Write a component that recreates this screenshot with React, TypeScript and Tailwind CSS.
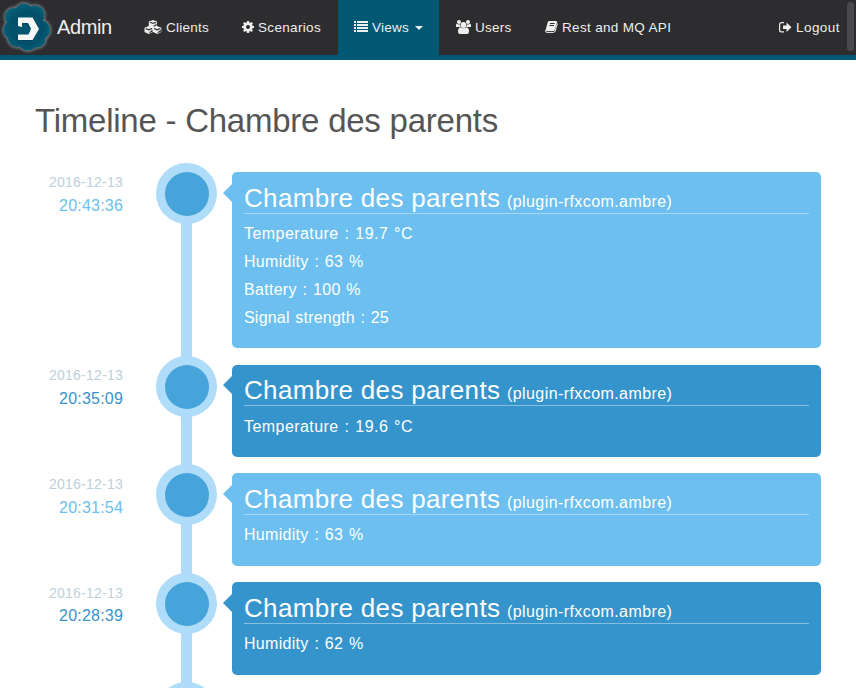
import React from 'react';

type Entry = {
  date: string;
  time: string;
  lines: string[];
  light: boolean;
  row: string;
  card: string;
  arrow: string;
  stamp: string;
  heading: string;
};

const entries: Entry[] = [
  { date: '2016-12-13', time: '20:43:36', light: true, row: 'h-[193px]', card: 'h-[176px] pt-[11px]', arrow: 'mt-3', stamp: 'h-[21px]', heading: 'mb-[6px]', lines: ['Temperature : 19.7 °C', 'Humidity : 63 %', 'Battery : 100 %', 'Signal strength : 25'] },
  { date: '2016-12-13', time: '20:35:09', light: false, row: 'h-[108px]', card: 'h-[92px] pt-[10px]', arrow: 'mt-[11px]', stamp: 'h-[21px]', heading: 'mb-[7px]', lines: ['Temperature : 19.6 °C'] },
  { date: '2016-12-13', time: '20:31:54', light: true, row: 'h-[109px]', card: 'h-[93px] pt-[11px]', arrow: 'mt-3', stamp: 'mt-px h-[21px]', heading: 'mb-[6px]', lines: ['Humidity : 63 %'] },
  { date: '2016-12-13', time: '20:28:39', light: false, row: 'h-[109px]', card: 'h-[93px] pt-[11px]', arrow: 'mt-3', stamp: 'mt-px h-[20px]', heading: 'mb-[6px]', lines: ['Humidity : 62 %'] },
];

function lineTracking(line: string) {
  if (line.startsWith('Temperature')) return 'tracking-[0.44px]';
  if (line.startsWith('Signal')) return 'tracking-[0.2px]';
  return 'tracking-[0.3px]';
}

function Cloud() {
  return (
    <>
      <circle cx="24" cy="12.500" r="9" />
      <circle cx="14" cy="17" r="9" />
      <circle cx="35" cy="15" r="9.500" />
      <circle cx="40" cy="30" r="10" />
      <circle cx="13" cy="30" r="9.500" />
      <circle cx="17" cy="38" r="9" />
      <circle cx="28" cy="40" r="10.500" />
      <circle cx="37" cy="39" r="8.500" />
      <circle cx="27" cy="28" r="17" />
    </>
  );
}

function Logo() {
  return (
    <svg className="h-[55px] w-[56px] shrink-0" viewBox="0 0 56 55">
      <defs>
        <radialGradient id="cloud" gradientUnits="userSpaceOnUse" cx="27" cy="28" r="26">
          <stop offset="0" stopColor="#005b76" />
          <stop offset="0.6" stopColor="#034f69" />
          <stop offset="1" stopColor="#07627c" />
        </radialGradient>
        <filter id="glow" x="-20%" y="-20%" width="140%" height="140%">
          <feGaussianBlur stdDeviation="1.5" />
        </filter>
      </defs>
      <g fill="#7f898c" stroke="#7f898c" strokeWidth="1.800" filter="url(#glow)"><Cloud /></g>
      <g fill="url(#cloud)"><Cloud /></g>
      <path d="M17 18.500H31L38 29.500L31 41H17V34H28L30 29L27 25H17Z" fill="#002b40" opacity=".3" />
      <path d="M18 17.500H32.500L39 29L32.500 40H18V34.500H28.500L31 28.800L28 23H22V27L18 26Z" fill="#f6f6f7" />
    </svg>
  );
}

function CubesIcon() {
  return (
    <svg className="mb-px h-[14px] w-[18px]" viewBox="0 0 18 14" fill="currentColor">
      <path d="M9 0L13 1.600V6L17.300 7.800V12L13.200 14L9 12L4.700 14L.5 12V7.800L4.800 6V1.600Z" />
      <path d="M6 2.300L9 3.500L12 2.300M9.500 6.300L12 5.200V3.700M1.700 8.500L4.800 9.800L8 8.500M5.300 12.500L8 11.300V9.700M10 8.500L13.200 9.800L16.300 8.500M13.700 12.500L16.300 11.300V9.700" fill="none" stroke="#2d2d2f" strokeWidth="1.100" />
    </svg>
  );
}

function CogIcon() {
  return (
    <svg className="mb-px h-[12px] w-[12px]" viewBox="0 0 12 12" fill="currentColor" fillRule="evenodd">
      <path d="M5 0H7L7.400 1.600L8.300 2L9.700 1.100L11 2.400L10 3.800L10.400 4.700L12 5V7L10.400 7.300L10 8.200L10.900 9.600L9.600 10.900L8.200 10L7.300 10.400L7 12H5L4.700 10.400L3.800 10L2.400 10.900L1.100 9.600L2 8.200L1.600 7.300L0 7V5L1.600 4.700L2 3.800L1.100 2.400L2.400 1.100L3.800 2L4.700 1.600ZM6 4A2 2 0 1 0 6 8A2 2 0 1 0 6 4Z" />
    </svg>
  );
}

function ListIcon() {
  return (
    <svg className="mb-[2px] h-[11px] w-[14px]" viewBox="0 0 14 11" fill="currentColor" shapeRendering="crispEdges">
      <path d="M0 0H2V2H0ZM3 0H14V2H3ZM0 3H2V5H0ZM3 3H14V5H3ZM0 6H2V8H0ZM3 6H14V8H3ZM0 9H2V11H0ZM3 9H14V11H3Z" />
    </svg>
  );
}

function UsersIcon() {
  return (
    <svg className="mb-px h-[14px] w-[15px]" viewBox="0 0 15 14" fill="currentColor">
      <circle cx="3" cy="2" r="2" />
      <circle cx="12" cy="2" r="2" />
      <path d="M0 7V5Q0 3.500 1 3.800Q2.500 4.900 4 4.200Q3.800 6 4.800 7H2ZM15 7V5Q15 3.500 14 3.800Q12.500 4.900 11 4.200Q11.200 6 10.200 7H13Z" />
      <circle cx="7.500" cy="5" r="2.900" />
      <path d="M4.500 7.200Q7.500 9.200 10.500 7.200Q13 7.700 13 11.500Q13 14 11 14H4Q2 14 2 11.500Q2 7.700 4.500 7.200Z" />
    </svg>
  );
}

function BookIcon() {
  return (
    <svg className="mb-px h-[12px] w-[13px]" viewBox="0 0 13 12">
      <path d="M4.200 0H11Q12.300 0 12 1.200L9.700 9Q9.400 10 8.400 10H2Q1 10 .5 9.500L2.800 1Q3.100 0 4.200 0Z" fill="currentColor" />
      <path d="M5 2.500H9.500M4.400 4.500H9" stroke="#2d2d2f" />
      <path d="M12.400 2.500L10.200 10Q9.800 11.400 8.500 11.400H2Q0 11.400 .6 9.500" fill="none" stroke="currentColor" />
    </svg>
  );
}

function LogoutIcon() {
  return (
    <svg className="mb-px h-[11px] w-[13px]" viewBox="0 0 13 11">
      <path d="M5 .6H2.500Q.6 .6 .6 2.500V8Q.6 9.900 2.500 9.900H5" fill="none" stroke="currentColor" strokeWidth="1.200" />
      <path d="M4 3.500H7.500V.5L12.500 5.300L7.500 10V7H4Z" fill="currentColor" />
    </svg>
  );
}

function Navbar() {
  return (
    <nav className="flex h-[60px] items-center border-b-[5px] border-[#005873] bg-[#2d2d2f] text-[13.5px] leading-[19px] tracking-[0.25px] text-[#eeeeee]">
      <Logo />
      <span className="mb-[2px] ml-px w-[87px] text-[20px] leading-[30px] tracking-[-0.4px]">Admin</span>
      <a className="flex w-[98px] items-center gap-1"><CubesIcon />Clients</a>
      <a className="flex w-[96px] items-center gap-1 tracking-[0.33px]"><CogIcon />Scenarios</a>
      <a className="flex h-full w-[101px] items-center gap-1 bg-[#005873] pl-4">
        <ListIcon />
        <span>Views</span>
        <span className="ml-[2px] border-x-4 border-t-4 border-x-transparent border-t-[#eeeeee]" />
      </a>
      <a className="flex w-[106px] items-center gap-1 pl-[17px]"><UsersIcon />Users</a>
      <a className="flex items-center gap-1 tracking-[0.33px]"><BookIcon />Rest and MQ API</a>
      <a className="mr-[7px] ml-auto flex items-center gap-1 tracking-[0.45px]"><LogoutIcon />Logout</a>
      <div className="mt-[2px] mr-[2px] h-[49px] w-[7px] self-start rounded-full bg-[#4a4a4c]" />
    </nav>
  );
}

function Dot() {
  return (
    <div className="relative -mt-[9px] size-[61px] rounded-full bg-[#afdcf8] pt-[9px] pl-[9px]">
      <div className="size-[44px] rounded-full bg-[#46a4da]" />
    </div>
  );
}

function TimelineRow({ entry }: { entry: Entry }) {
  const { light } = entry;
  return (
    <li className={`flex ${entry.row}`}>
      <div className="w-[123px] text-right">
        <div className={`text-[14px] leading-[21px] tracking-[0.25px] text-[#bdd0db] ${entry.stamp}`}>{entry.date}</div>
        <div className={`text-[16px] leading-[25px] tracking-[0.2px] ${light ? 'text-[#6cbfee]' : 'text-[#3594cb]'}`}>{entry.time}</div>
      </div>
      <div className="ml-[33px] flex w-[61px] flex-col items-center">
        <Dot />
        <div className="-mt-px w-[11px] flex-1 bg-[#afdcf8]" />
      </div>
      <div className={`ml-[6px] h-[18px] w-[9px] border-y-[9px] border-r-[9px] border-y-transparent ${entry.arrow} ${light ? 'border-r-[#6cbfee]' : 'border-r-[#3594cb]'}`} />
      <div className={`w-[589px] rounded-[5px] px-3 text-white ${entry.card} ${light ? 'bg-[#6cbfee]' : 'bg-[#3594cb]'}`}>
        <h2 className={`flex h-[31px] items-baseline border-b border-white/40 leading-[30px] ${entry.heading}`}>
          <span className="w-[263px] text-[26px] tracking-[0.33px]">Chambre des parents</span>
          <span className="text-[16px] tracking-[0.42px]">(plugin-rfxcom.ambre)</span>
        </h2>
        <div className="text-[16px] leading-7 [word-spacing:1px]">
          {entry.lines.map((line) => <p key={line} className={lineTracking(line)}>{line}</p>)}
        </div>
      </div>
    </li>
  );
}

export default function App() {
  return (
    <div className="h-[688px] w-[856px] overflow-hidden bg-white font-['Nimbus_Sans','Liberation_Sans',sans-serif]">
      <Navbar />
      <main>
        <h1 className="h-[112px] pt-[41px] pl-[35px] text-[33px] leading-[40px] tracking-[-0.24px] text-[#555555]">Timeline - Chambre des parents</h1>
        <ul>
          {entries.map((entry) => <TimelineRow key={entry.time} entry={entry} />)}
          <li className="pl-[156px]"><Dot /></li>
        </ul>
      </main>
    </div>
  );
}
